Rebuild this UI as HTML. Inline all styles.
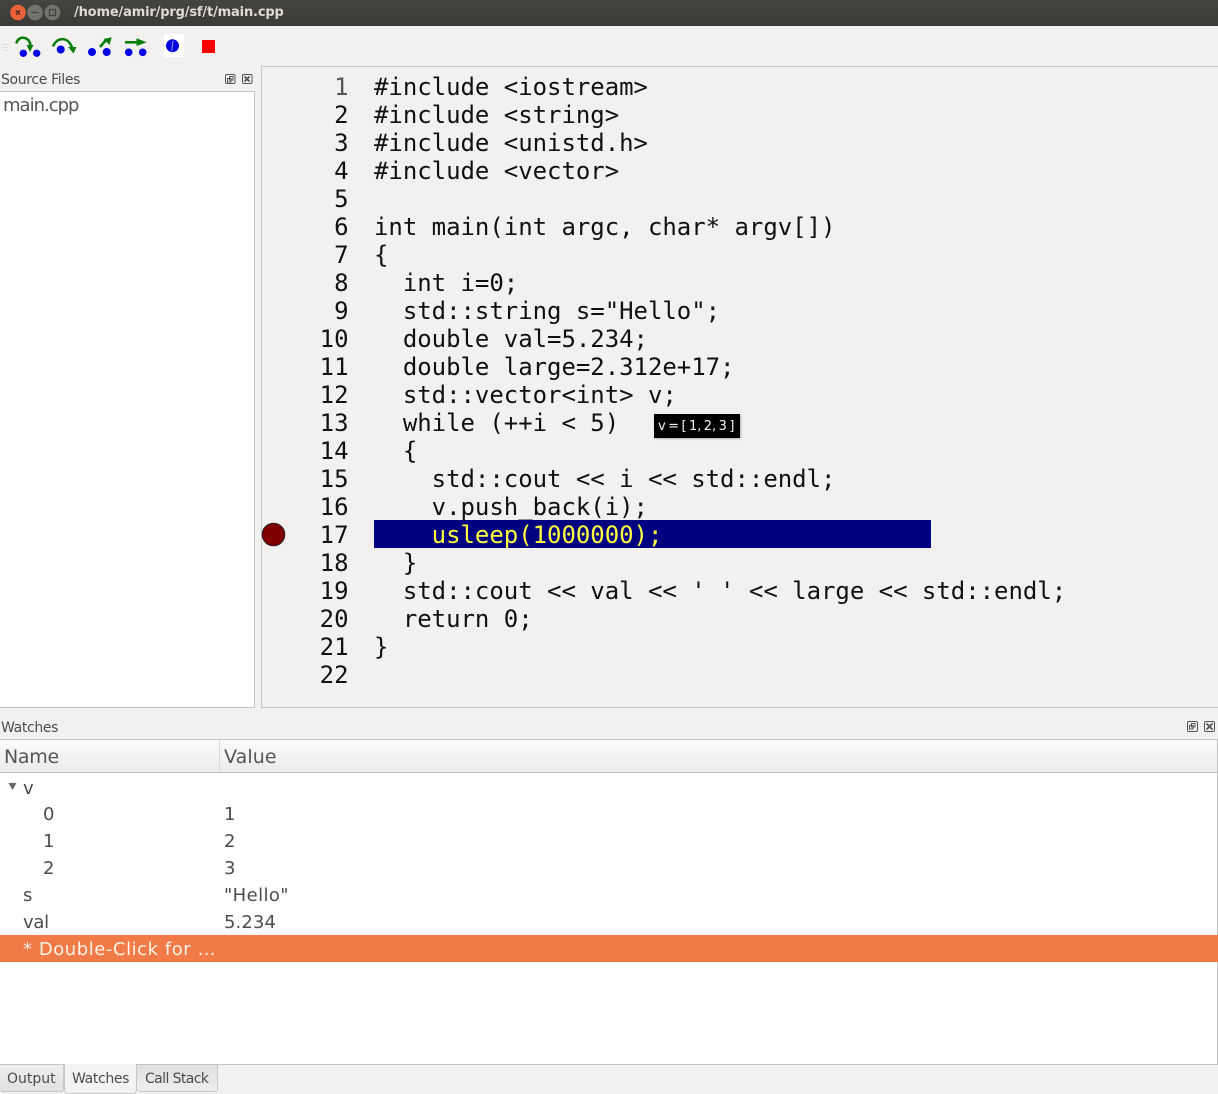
<!DOCTYPE html>
<html><head><meta charset="utf-8">
<style>
html,body{margin:0;padding:0}
body{width:1218px;height:1094px;position:relative;overflow:hidden;background:#f2f1f0;font-family:"DejaVu Sans","Liberation Sans",sans-serif;color:#4c4c4c}
.a{position:absolute;white-space:pre}
.box{position:absolute;box-sizing:border-box}
.wrap{position:absolute;left:0;top:1px;width:1218px;height:700px}
.code{font-family:"DejaVu Sans Mono",monospace;font-size:24px;line-height:28px;color:#111;position:absolute;white-space:pre;height:28px;letter-spacing:-.03px}
.ln{left:300.5px;width:48px;text-align:right}
.c{left:374px}
.ui{font-size:14px;line-height:18px;letter-spacing:-.35px}
.t{font-size:18px;line-height:24px;letter-spacing:-.3px}
</style></head><body>

<div class="box" style="left:0;top:0;width:1218px;height:26px;background:linear-gradient(#45443f,#3b3a36)"></div>
<svg class="box" style="left:0;top:0" width="70" height="26">
<circle cx="18" cy="12.500" r="7.800" fill="#e9623a"/><path d="M16 10.500l4 4M20 10.500l-4 4" stroke="#4a2a1c" stroke-width="1.300"/>
<circle cx="35" cy="12.500" r="7.800" fill="#74736b"/><path d="M31.500 12.500h7" stroke="#45443f" stroke-width="1.300"/>
<circle cx="52.500" cy="12.500" r="7.800" fill="#74736b"/><rect x="49.500" y="9.500" width="6" height="6" fill="none" stroke="#45443f" stroke-width="1.300"/>
</svg>
<div class="a" style="left:74px;top:3px;font:bold 13px/19px 'DejaVu Sans',sans-serif;color:#dfdbd2;letter-spacing:-.16px">/home/amir/prg/sf/t/main.cpp</div>

<svg class="box" style="left:0;top:26px" width="230" height="40">
<g fill="#ddd"><rect x="3" y="18" width="5" height="1"/><rect x="3" y="21" width="5" height="1"/><rect x="3" y="24" width="5" height="1"/></g>
<g fill="#0000e6">
<circle cx="23.300" cy="27.300" r="3.700"/><circle cx="36.700" cy="27.300" r="3.700"/>
<circle cx="60.700" cy="23.500" r="4"/>
<circle cx="92" cy="26" r="4"/><circle cx="106.700" cy="26" r="4"/>
<circle cx="128.700" cy="26.300" r="3.800"/><circle cx="142.700" cy="26.300" r="3.800"/>
</g>
<g fill="none" stroke="#0a7d0a" stroke-width="2.600">
<path d="M16.500 17.500c1-8 13-8 14 2"/>
<path d="M53 20.500c4-10 15-10 19 1"/>
<path d="M100 21l6-7"/>
<path d="M125 16.300h13"/>
</g>
<g fill="#0a7d0a">
<path d="M26.500 19h7l-3.500 7z"/>
<path d="M68 21h8.500l-3 6.500z"/>
<path d="M103.500 13l8.200-1.700-2.200 7.700z"/>
<path d="M136.500 12.300l10.200 4-10.200 3.700z"/>
</g>
<rect x="164" y="8" width="20" height="23" fill="#fff"/>
<circle cx="172.500" cy="19.700" r="6.500" fill="#0000e0"/>
<path d="M173.500 15c-2 1 0 3-1 5s0 3-1 5" stroke="#9aa0ee" stroke-width="1" fill="none"/>
<rect x="202" y="14" width="13" height="13" fill="#f00"/>
</svg>

<div class="a ui" style="left:1px;top:71px;">Source Files</div>
<svg class="box" style="left:224px;top:73px" width="30" height="14" fill="none" stroke="#555" stroke-width="1">
<rect x="1.500" y="1.500" width="9.500" height="9" rx="1.500"/><rect x="5.500" y="3.500" width="3.500" height="3.500"/><rect x="3.500" y="5.500" width="3.500" height="3.500"/>
<rect x="18.500" y="1.500" width="9.500" height="9" rx="1.500"/><path d="M20.500 3.500l5 5M25.500 3.500l-5 5" stroke-width="1.800"/>
</svg>
<div class="box" style="left:-1px;top:91px;width:256px;height:617px;background:#fff;border:1px solid #c4c3c1"></div>
<div class="a t" style="left:3px;top:94px;color:#555;letter-spacing:-1px">main.cpp</div>

<div class="box" style="left:261px;top:66px;width:958px;height:642px;background:#f2f1f0;border:1px solid #c8c7c5"></div>

<div class="wrap">
<div class="code ln" style="top:72px;color:#555">1</div><div class="code c" style="top:72px">#include &lt;iostream&gt;</div>
<div class="code ln" style="top:100px">2</div><div class="code c" style="top:100px">#include &lt;string&gt;</div>
<div class="code ln" style="top:128px">3</div><div class="code c" style="top:128px">#include &lt;unistd.h&gt;</div>
<div class="code ln" style="top:156px">4</div><div class="code c" style="top:156px">#include &lt;vector&gt;</div>
<div class="code ln" style="top:184px">5</div>
<div class="code ln" style="top:212px">6</div><div class="code c" style="top:212px">int main(int argc, char* argv[])</div>
<div class="code ln" style="top:240px">7</div><div class="code c" style="top:240px">{</div>
<div class="code ln" style="top:268px">8</div><div class="code c" style="top:268px">  int i=0;</div>
<div class="code ln" style="top:296px">9</div><div class="code c" style="top:296px">  std::string s="Hello";</div>
<div class="code ln" style="top:324px">10</div><div class="code c" style="top:324px">  double val=5.234;</div>
<div class="code ln" style="top:352px">11</div><div class="code c" style="top:352px">  double large=2.312e+17;</div>
<div class="code ln" style="top:380px">12</div><div class="code c" style="top:380px">  std::vector&lt;int&gt; v;</div>
<div class="code ln" style="top:408px">13</div><div class="code c" style="top:408px">  while (++i &lt; 5)</div>
<div class="code ln" style="top:436px">14</div><div class="code c" style="top:436px">  {</div>
<div class="code ln" style="top:464px">15</div><div class="code c" style="top:464px">    std::cout &lt;&lt; i &lt;&lt; std::endl;</div>
<div class="code ln" style="top:492px">16</div><div class="code c" style="top:492px">    v.push_back(i);</div>
<div class="box" style="left:374px;top:519px;width:557px;height:28px;background:#000080"></div>
<div class="code ln" style="top:520px">17</div><div class="code c" style="top:520px;color:#ffff40">    usleep(1000000);</div>
<div class="code ln" style="top:548px">18</div><div class="code c" style="top:548px">  }</div>
<div class="code ln" style="top:576px">19</div><div class="code c" style="top:576px">  std::cout &lt;&lt; val &lt;&lt; ' ' &lt;&lt; large &lt;&lt; std::endl;</div>
<div class="code ln" style="top:604px">20</div><div class="code c" style="top:604px">  return 0;</div>
<div class="code ln" style="top:632px">21</div><div class="code c" style="top:632px">}</div>
<div class="code ln" style="top:660px">22</div>
</div>

<svg class="box" style="left:261px;top:522px" width="25" height="25"><circle cx="12.500" cy="12.500" r="11.300" fill="#800000" stroke="#222" stroke-width="1"/></svg>

<div class="box" style="left:654px;top:414px;width:86px;height:24px;background:#000;box-shadow:1px 1px 2px rgba(0,0,0,.25)"></div>
<div class="a" style="left:658px;top:418px;font:13px/18px 'DejaVu Sans',sans-serif;color:#f2f2f2;word-spacing:-1.7px">v = [ 1, 2, 3 ]</div>

<div class="a ui" style="left:1px;top:719px;">Watches</div>
<svg class="box" style="left:1186px;top:720px" width="30" height="14" fill="none" stroke="#555" stroke-width="1">
<rect x="1.500" y="1.500" width="10" height="10" rx="1.500"/><rect x="5.500" y="3.500" width="3.500" height="3.500"/><rect x="3.500" y="5.500" width="3.500" height="3.500"/>
<rect x="18.500" y="1.500" width="10" height="10" rx="1.500"/><path d="M20.500 3.500l6 6M26.500 3.500l-6 6" stroke-width="1.800"/>
</svg>

<div class="box" style="left:-1px;top:739px;width:1219px;height:326px;background:#fff;border:1px solid #c4c3c1"></div>
<div class="box" style="left:0;top:740px;width:1217px;height:33px;background:linear-gradient(#fbfbfa,#ecebea);border-bottom:1px solid #bdbcba"></div>
<div class="box" style="left:219px;top:740px;width:1px;height:32px;background:#d8d7d5"></div>
<div class="a t" style="left:4px;top:745px;font-size:19px;color:#555">Name</div>
<div class="a t" style="left:224px;top:745px;font-size:19px;color:#555;letter-spacing:.1px">Value</div>

<svg class="box" style="left:8px;top:782px" width="10" height="9"><path d="M0.500 1h8l-4 7z" fill="#666"/></svg>
<div class="a t" style="left:23px;top:777px">v</div>
<div class="a t" style="left:43px;top:803px">0</div><div class="a t" style="left:224px;top:803px">1</div>
<div class="a t" style="left:43px;top:830px">1</div><div class="a t" style="left:224px;top:830px">2</div>
<div class="a t" style="left:43px;top:857px">2</div><div class="a t" style="left:224px;top:857px">3</div>
<div class="a t" style="left:23px;top:884px">s</div><div class="a t" style="left:224px;top:884px;letter-spacing:.4px">"Hello"</div>
<div class="a t" style="left:23px;top:911px">val</div><div class="a t" style="left:224px;top:911px;letter-spacing:.1px">5.234</div>
<div class="box" style="left:0;top:935px;width:1218px;height:27px;background:#f27a47"></div>
<div class="a t" style="left:23px;top:938px;color:#fff3e6;letter-spacing:.55px">* Double-Click for …</div>

<div class="box" style="left:0;top:1065px;width:64px;height:27px;background:linear-gradient(#efeeed,#e2e1e0);border-right:1px solid #c8c7c5;border-bottom:1px solid #c8c7c5;border-radius:0 0 3px 3px"></div>
<div class="box" style="left:64px;top:1064px;width:73px;height:30px;background:#f4f3f2;border:1px solid #c8c7c5;border-top:none;border-radius:0 0 4px 4px"></div>
<div class="box" style="left:137px;top:1065px;width:81px;height:27px;background:linear-gradient(#e0dfde,#efeeed);border-right:1px solid #c8c7c5;border-bottom:1px solid #c8c7c5;border-radius:0 0 3px 3px"></div>
<div class="a ui" style="left:7px;top:1070px;letter-spacing:0">Output</div>
<div class="a ui" style="left:72px;top:1070px;">Watches</div>
<div class="a ui" style="left:145px;top:1070px;letter-spacing:-.6px">Call Stack</div>

</body></html>
